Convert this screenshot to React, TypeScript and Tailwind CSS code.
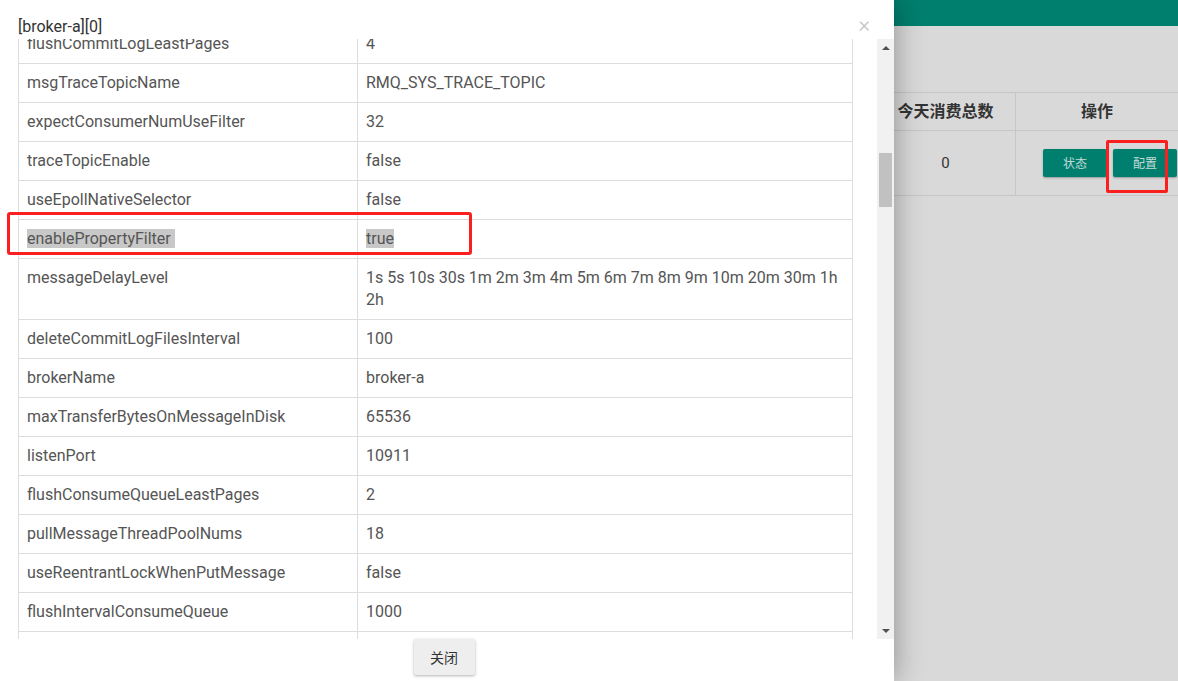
const ROWS: [string, string][] = [
  ['flushCommitLogLeastPages', '4'],
  ['msgTraceTopicName', 'RMQ_SYS_TRACE_TOPIC'],
  ['expectConsumerNumUseFilter', '32'],
  ['traceTopicEnable', 'false'],
  ['useEpollNativeSelector', 'false'],
  ['enablePropertyFilter', 'true'],
  ['messageDelayLevel', '1s 5s 10s 30s 1m 2m 3m 4m 5m 6m 7m 8m 9m 10m 20m 30m 1h 2h'],
  ['deleteCommitLogFilesInterval', '100'],
  ['brokerName', 'broker-a'],
  ['maxTransferBytesOnMessageInDisk', '65536'],
  ['listenPort', '10911'],
  ['flushConsumeQueueLeastPages', '2'],
  ['pullMessageThreadPoolNums', '18'],
  ['useReentrantLockWhenPutMessage', 'false'],
  ['flushIntervalConsumeQueue', '1000'],
  ['haListenPort', '10912'],
  ['osPageCacheBusyTimeOutMills', '1000'],
];

const HIGHLIGHT = 'enablePropertyFilter';

export default function App() {
  return (
    <div className="relative h-[681px] w-[1178px] overflow-hidden bg-[#d9d9d9] font-['Roboto','Noto_Sans_CJK_SC',sans-serif]">
      {/* page behind the modal */}
      <div className="h-[26px] bg-[#007f6f]" />
      <div className="mt-[66px] flex justify-end">
        <div className="w-[302px] border-t border-[#c6c6c6] text-[#333]">
          <div className="grid h-[38px] grid-cols-[140px_162px] border-b border-[#c6c6c6]">
            <div className="flex items-center justify-center border-r border-[#c6c6c6] pb-[4px] text-[16px] font-bold font-['Noto_Sans_CJK_SC',sans-serif]">
              今天消费总数
            </div>
            <div className="flex items-center justify-center pb-[4px] text-[16px] font-bold font-['Noto_Sans_CJK_SC',sans-serif]">
              操作
            </div>
          </div>
          <div className="grid h-[65px] grid-cols-[140px_162px] border-b border-[#c6c6c6]">
            <div className="flex items-center justify-center border-r border-[#c6c6c6] text-[15px]">0</div>
            <div className="flex items-center gap-[6px] pl-[27px]">
              <button className="h-[28px] w-[64px] rounded-[2px] bg-[#007f6f] text-[12px] text-[#c4dcd8] shadow-[0_1px_2px_rgba(0,0,0,0.3)] font-['Noto_Sans_CJK_SC',sans-serif]">
                状态
              </button>
              <button className="h-[28px] w-[64px] rounded-[2px] bg-[#007f6f] text-[12px] text-[#c4dcd8] shadow-[0_1px_2px_rgba(0,0,0,0.3)] font-['Noto_Sans_CJK_SC',sans-serif]">
                配置
              </button>
            </div>
          </div>
        </div>
      </div>

      {/* modal */}
      <div className="absolute left-0 top-0 flex h-full w-[894px] flex-col bg-white shadow-[0_0_28px_rgba(0,0,0,0.35)]">
        <div className="relative h-[39px] pl-[18px] pt-[17px] text-[16px] leading-[20px] text-[#333]">
          [broker-a][0]
          <span className="absolute right-[24px] top-[14px] text-[22px] font-light leading-[22px] text-[#c4c4c4]">×</span>
        </div>
        <div className="flex h-[600px]">
          <div className="w-[877px] overflow-hidden pl-[18px]">
            <div className="-mt-[14px] w-[835px] border-x border-[#dddddd] text-[16px] leading-[22px] text-[#555]">
              {ROWS.map(([k, v]) => (
                <div key={k} className="grid grid-cols-[339px_1fr] border-b border-[#dddddd]">
                  <div className="border-r border-[#dddddd] px-[8px] py-[8px]">
                    {k === HIGHLIGHT ? <span className="bg-[#c8c8c8]">{k + '\u00a0'}</span> : k}
                  </div>
                  <div className="px-[8px] py-[8px]">
                    {k === HIGHLIGHT ? <span className="bg-[#c8c8c8]">{v}</span> : v}
                  </div>
                </div>
              ))}
            </div>
          </div>
          <div className="relative w-[17px] bg-[#f1f1f1]">
            <div className="flex h-[17px] items-center justify-center">
              <div className="h-0 w-0 border-x-[4px] border-b-[4px] border-x-transparent border-b-[#505050]" />
            </div>
            <div className="absolute left-[2px] top-[114px] h-[54px] w-[13px] bg-[#c1c1c1]" />
            <div className="absolute bottom-0 flex h-[17px] w-full items-center justify-center">
              <div className="h-0 w-0 border-x-[4px] border-t-[4px] border-x-transparent border-t-[#505050]" />
            </div>
          </div>
        </div>
        <div className="flex justify-center pr-[6px]">
          <button className="h-[36px] w-[61px] rounded-[2px] bg-[#eeeeee] text-[14px] text-[#333] shadow-[0_1px_3px_rgba(0,0,0,0.3)] font-['Noto_Sans_CJK_SC',sans-serif]">
            关闭
          </button>
        </div>
      </div>

      {/* annotation boxes */}
      <div className="absolute left-[7px] top-[212px] h-[43px] w-[465px] rounded-[3px] border-[3px] border-[#fb1f1f]" />
      <div className="absolute left-[1106px] top-[140px] h-[53px] w-[62px] rounded-[2px] border-[3px] border-[#fb1f1f]" />
    </div>
  );
}
